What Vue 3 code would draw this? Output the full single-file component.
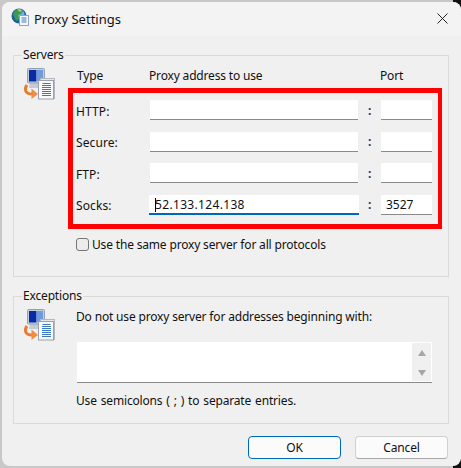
<template>
  <div class="screen">
    <i class="corner corner--top"></i>
    <i class="corner corner--bottom"></i>
    <div class="dialog">
      <!-- title bar -->
      <div class="titlebar">
        <svg class="title-icon" width="18" height="18" viewBox="0 0 18 18">
          <circle cx="8" cy="8" r="7.5" fill="#1f5f9e" />
          <circle cx="8.5" cy="6.5" r="5" fill="#6fb6de" />
          <path d="M2 7c0-3 3-6 7-6l3 2-2 3-3 1 1 3-2 3-2-2-1-3z" fill="#3f9a4a" />
          <path d="M6 1.5l3-.5 2 2-2 1z" fill="#9fd08a" />
          <rect x="8.5" y="7.5" width="9" height="10" fill="#f4f7fb" stroke="#97a3b2" stroke-width="1" />
          <path d="M10.5 10h5M10.5 12h5M10.5 14h5" stroke="#3f7fc4" stroke-width="1" />
        </svg>
        <span class="title-text">Proxy Settings</span>
        <svg class="close-icon" width="11" height="11" viewBox="0 0 11 11">
          <path d="M.5.5l10 10M10.5.5l-10 10" stroke="#222" stroke-width="1" fill="none" />
        </svg>
      </div>

      <div class="body">
        <fieldset class="group servers">
          <legend>Servers</legend>
          <div class="group__inner">
            <svg class="group-icon" width="32" height="32" viewBox="0 0 32 32">
              <g id="proxy-icon">
                <path d="M6 14h10l2 6H5z" fill="#c5cbd3" />
                <rect x="3.5" y="0.5" width="17" height="14.5" rx="1" fill="#c3cedb" stroke="#94a1b2" />
                <rect x="5" y="2" width="7.5" height="11.5" fill="#0a2aa5" />
                <path d="M12.5 2H19v8l-6.500 3.500z" fill="#6f9ade" />
                <rect x="16.500" y="10.500" width="14" height="20" fill="#e3e6ea" stroke="#b3b9c2" />
                <rect x="14.500" y="12.500" width="15" height="18.500" fill="#f7f9fb" stroke="#98a1ad" />
                <path d="M18.500 15.500h8M18 17.500h9M18 19.500h9M18 21.500h9M18 23.500h9M18 25.500h9M18 27.500h9" stroke="#3d78bd" stroke-width="1" />
                <path d="M3 17C0 21 1 26 8 26" fill="none" stroke="#e57f36" stroke-width="3" />
                <path d="M7.500 20.500l6.500 5.500-6.500 5z" fill="#ee8d45" />
              </g>
            </svg>
            <div class="servers__main">
              <div class="head-row">
                <span class="head-type">Type</span>
                <span class="head-addr">Proxy address to use</span>
                <span class="head-port">Port</span>
              </div>
              <div class="proxy-box">
                <div v-for="row in rows" :key="row.label" class="proxy-row">
                  <span class="proxy-label">{{ row.label }}</span>
                  <div class="field addr" :class="{ 'field--focus': row.focus }">
                    <i v-if="row.focus" class="caret"></i>{{ row.addr }}
                  </div>
                  <span class="colon">:</span>
                  <div class="field port">{{ row.port }}</div>
                </div>
              </div>
              <div class="same-row">
                <span class="checkbox"></span>
                <span>Use the same proxy server for all protocols</span>
              </div>
            </div>
          </div>
        </fieldset>

        <fieldset class="group exceptions">
          <legend>Exceptions</legend>
          <div class="group__inner">
            <svg class="group-icon" width="32" height="32" viewBox="0 0 32 32">
              <use href="#proxy-icon" />
            </svg>
            <div class="exceptions__main">
              <div class="exc-text">Do not use proxy server for addresses beginning with:</div>
              <div class="exc-area">
                <div class="exc-scroll">
                  <svg width="8" height="6" viewBox="0 0 8 6"><path d="M4 0l4 6H0z" fill="#a6a6a6" /></svg>
                  <svg width="8" height="6" viewBox="0 0 8 6"><path d="M0 0h8L4 6z" fill="#a6a6a6" /></svg>
                </div>
              </div>
              <div class="exc-hint">Use semicolons ( ; ) to separate entries.</div>
            </div>
          </div>
        </fieldset>

        <div class="actions">
          <button class="btn btn--primary">OK</button>
          <button class="btn">Cancel</button>
        </div>
      </div>
    </div>
  </div>
</template>

<script setup>
const rows = [
  { label: 'HTTP:', addr: '', port: '' },
  { label: 'Secure:', addr: '', port: '' },
  { label: 'FTP:', addr: '', port: '' },
  { label: 'Socks:', addr: '52.133.124.138', port: '3527', focus: true }
]
</script>

<style>
html, body { margin: 0; background: #c8c8c8; }
</style>

<style scoped>
.screen {
  position: relative;
  width: 461px;
  height: 468px;
  overflow: hidden;
  padding: 2px 0 0 2px;
  box-sizing: border-box;
  background: #c8c8c8;
  font-family: "Noto Sans", sans-serif;
  font-size: 12px;
  letter-spacing: -0.17px;
  color: #111;
}

/* 背後のウィンドウが見える角 */
.corner {
  position: absolute;
  right: 0;
  width: 8px;
  height: 9px;
  background: #111;
}
.corner--top { top: 0; }
.corner--bottom { bottom: 0; }

.dialog {
  position: relative;
  width: 459px;
  height: 464px;
  box-sizing: border-box;
  border-radius: 8px;
  background: #f0f0f0;
  overflow: hidden;
}

.titlebar {
  display: flex;
  align-items: center;
  height: 34px;
  padding: 0 13px 0 9px;
  background: #f3f3f3;
}
.title-icon { margin: -4px 5px 0 0; }
.title-text { flex: 1; font-size: 13px; letter-spacing: 0; }
.close-icon { margin-top: -2px; }

.body { padding: 11px 12px 0 11px; }

.group {
  box-sizing: border-box;
  margin: 0;
  padding: 0;
  border: 1px solid #dadada;
  min-width: 0;
}
.group legend {
  margin-left: 8px;
  padding: 0 1px;
  line-height: 16px;
}
.group__inner { display: flex; }
.group-icon { margin: 5px 0 0 10px; flex-shrink: 0; overflow: visible; }

.servers { height: 230px; }
.servers__main { margin-left: 12px; width: 374px; }

.head-row { display: flex; height: 21px; padding-top: 4px; }
.head-type { margin-left: 9px; width: 72px; }
.head-addr { width: 231px; }

.proxy-box {
  height: 141px;
  box-sizing: border-box;
  border: 5px solid #f00;
  border-right-width: 4px;
  padding-top: 7px;
  display: flex;
  flex-direction: column;
  gap: 11.5px;
}
.proxy-row { display: flex; align-items: center; height: 20px; }
.proxy-label {
  width: 77px;
  padding: 2px 0 0 3px;
  box-sizing: border-box;
  letter-spacing: 0.1px;
}

.field {
  height: 20px;
  box-sizing: border-box;
  background: #fff;
  border-bottom: 1px solid #8a8a8a;
  line-height: 19px;
  position: relative;
}
.addr { width: 208px; padding-left: 4px; }
.port { width: 51px; padding-left: 5px; letter-spacing: 0; }
.field--focus {
  width: 210px;
  margin: 0 -1px;
  padding-left: 6px;
  border-bottom: 2px solid #0067c0;
  letter-spacing: 0.33px;
}
.caret {
  position: absolute;
  left: 6px;
  top: 3px;
  width: 1px;
  height: 14px;
  background: #000;
}
.colon { width: 23px; text-align: center; color: #1f3a66; font-weight: 700; }

.same-row { display: flex; align-items: center; gap: 3px; margin: 7px 0 0 8px; }
.checkbox {
  width: 11px;
  height: 11px;
  border: 1px solid #777;
  border-radius: 3px;
  background: #ececec;
}

.exceptions { height: 136px; margin-top: 11px; }
.exceptions__main { margin-left: 21px; width: 355px; }
.exc-text { line-height: 16px; margin: 5px 0 0 -1px; }
.exc-area {
  display: flex;
  justify-content: flex-end;
  height: 41px;
  box-sizing: border-box;
  margin-top: 17px;
  background: #fff;
  border-bottom: 1px solid #8a8a8a;
}
.exc-scroll {
  width: 19px;
  background: #f0f0f0;
  display: flex;
  flex-direction: column;
  align-items: center;
  justify-content: space-between;
  padding: 7px 0 5px;
  box-sizing: border-box;
  margin: 1px 1px 1px 0;
}
.exc-hint { margin: 10px 0 0 -1px; line-height: 16px; word-spacing: 1px; }

.actions { display: flex; justify-content: flex-end; gap: 14px; margin: 12px 1px 0 0; }
.btn {
  width: 93px;
  height: 23px;
  padding: 0;
  border: 1px solid #d0d0d0;
  border-bottom-color: #a8a8a8;
  border-radius: 4px;
  background: #fbfbfb;
  font: inherit;
  letter-spacing: inherit;
  color: #111;
}
.btn--primary { border: 1px solid #0067c0; }
</style>
